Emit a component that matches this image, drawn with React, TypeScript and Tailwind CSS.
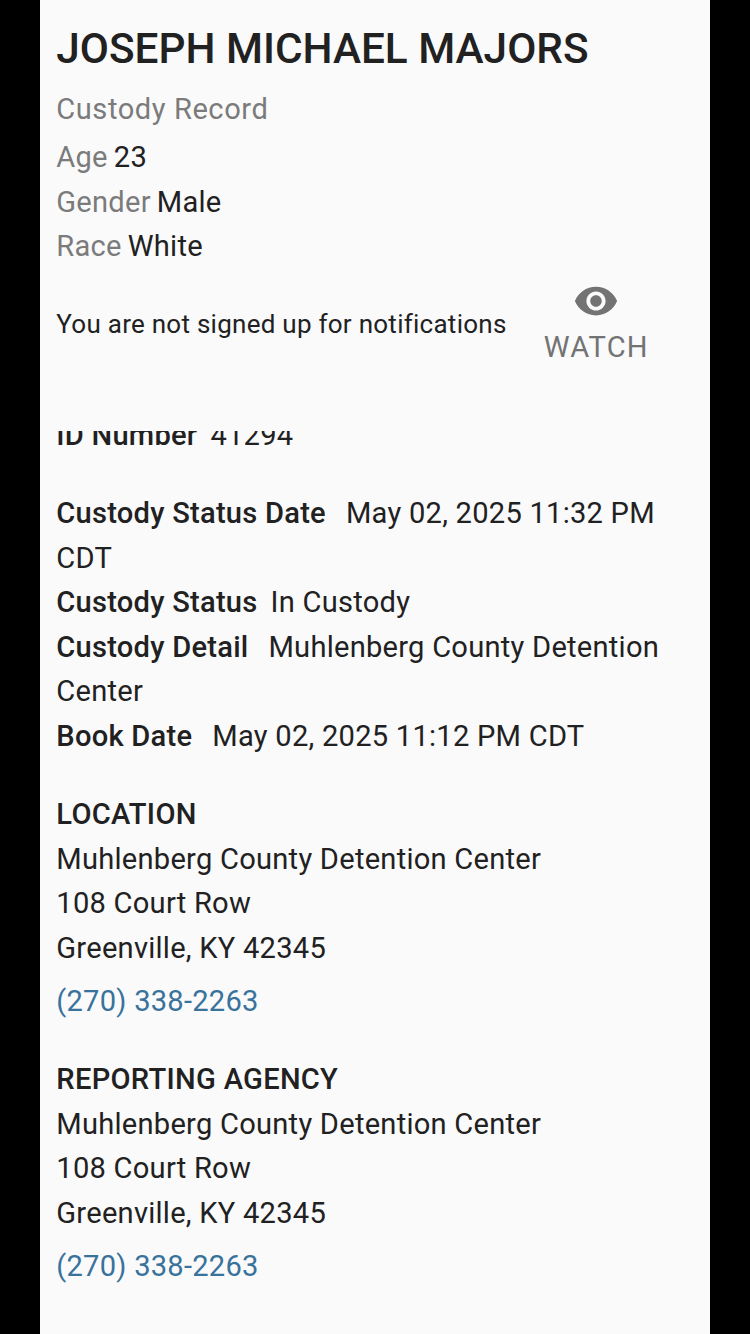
import { MdVisibility } from 'react-icons/md'

const personalInfo = [
  { label: 'Age', value: '23' },
  { label: 'Gender', value: 'Male' },
  { label: 'Race', value: 'White' },
]

function Contact({ title }: { title: string }) {
  return (
    <section className="mt-[34px]">
      <h2 className="font-medium tracking-[0.3px]">{title}</h2>
      <p>Muhlenberg County Detention Center</p>
      <p>108 Court Row</p>
      <p>Greenville, KY 42345</p>
      <a href="tel:2703382263" className="mt-[8.5px] block text-[#39729b]">
        (270) 338-2263
      </a>
    </section>
  )
}

export default function App() {
  return (
    <div className="h-[1334px] overflow-hidden bg-black px-10 font-['Roboto',sans-serif]">
      <main className="h-full bg-[#fafafb] pr-4 pl-[16.3px] text-[29.1px] leading-[44.5px] tracking-[0.25px] text-[#212122]">
        {/* Header */}
        <header className="h-[431px] pt-[21px]">
          <h1 className="text-[42.3px] leading-[56px] font-medium tracking-[0px] whitespace-nowrap">
            JOSEPH MICHAEL MAJORS
          </h1>
          <p className="mt-[10px] tracking-[0.55px] text-[#7b7b7c]">Custody Record</p>
          <dl className="mt-[3.5px]">
            {personalInfo.map((item) => (
              <div key={item.label} className="flex gap-[6px]">
                <dt className="text-[#7b7b7c]">{item.label}</dt>
                <dd>{item.value}</dd>
              </div>
            ))}
          </dl>
          <div className="mt-[15px] flex items-start">
            <p className="w-[487.5px] pt-[20.5px] text-[26px] leading-[40px] tracking-[0.26px] whitespace-nowrap">
              You are not signed up for notifications
            </p>
            <button className="flex w-[105px] flex-col items-center text-[#737374]">
              <MdVisibility size={46} className="-mt-[6px] mb-px" />
              <span className="tracking-[1.2px]">WATCH</span>
            </button>
          </div>
        </header>

        {/* Scrolled details */}
        <div className="h-[903px] overflow-hidden">
          <p className="-mt-[18px]">
            <b className="mr-[13px] font-medium">ID Number</b>41294
          </p>
          <div className="mt-[33.5px]">
            <p><b className="mr-[20px] font-medium">Custody Status Date</b>May 02, 2025 11:32 PM CDT</p>
            <p><b className="mr-[13px] font-medium">Custody Status</b>In Custody</p>
            <p><b className="mr-[20px] font-medium">Custody Detail</b>Muhlenberg County Detention Center</p>
            <p><b className="mr-[20px] font-medium">Book Date</b>May 02, 2025 11:12 PM CDT</p>
          </div>
          <Contact title="LOCATION" />
          <Contact title="REPORTING AGENCY" />
        </div>
      </main>
    </div>
  )
}
